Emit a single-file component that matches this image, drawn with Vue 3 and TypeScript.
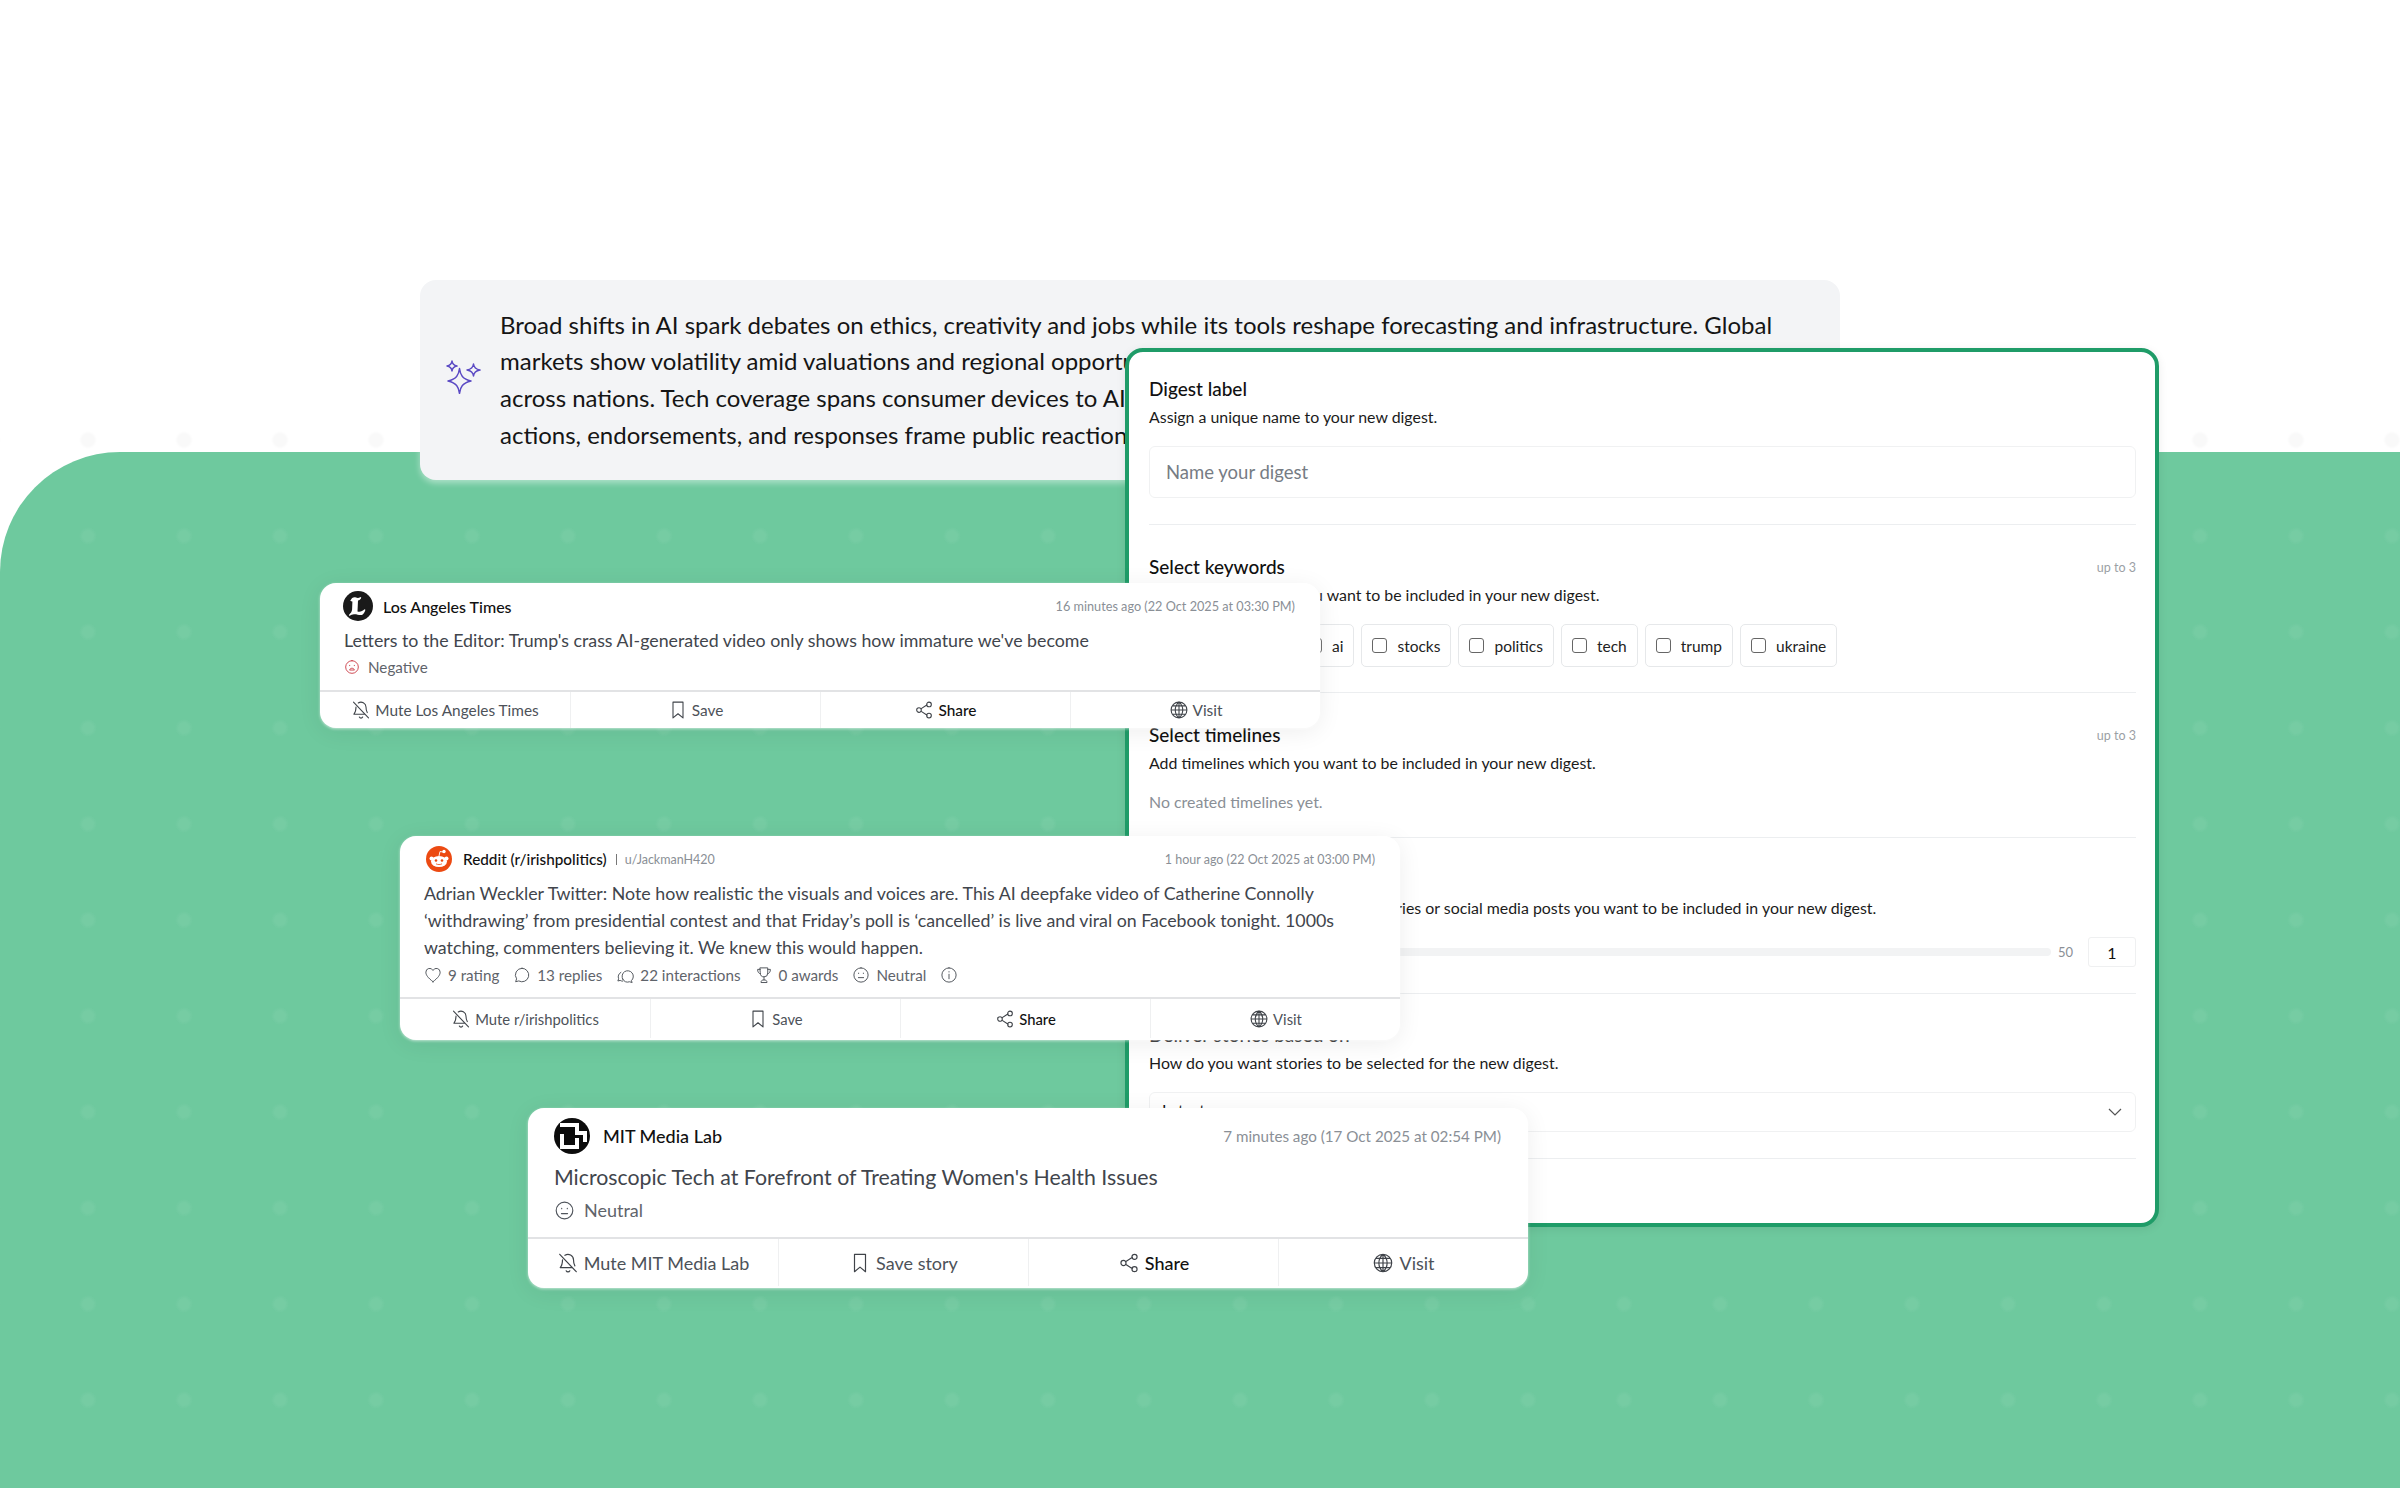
<script setup lang="ts">
interface StoryAction {
  icon: string
  label: string
  strong?: boolean
}

const summaryLines = [
  'Broad shifts in AI spark debates on ethics, creativity and jobs while its tools reshape forecasting and infrastructure. Global',
  'markets show volatility amid valuations and regional opportunities as investors weigh policy moves',
  'across nations. Tech coverage spans consumer devices to AI infrastructure and chips',
  'actions, endorsements, and responses frame public reaction',
]
const redditLines = [
  'Adrian Weckler Twitter: Note how realistic the visuals and voices are. This AI deepfake video of Catherine Connolly',
  '‘withdrawing’ from presidential contest and that Friday’s poll is ‘cancelled’ is live and viral on Facebook tonight. 1000s',
  'watching, commenters believing it. We knew this would happen.',
]

const laActions: StoryAction[] = [
  { icon: 'mute', label: 'Mute Los Angeles Times' },
  { icon: 'save', label: 'Save' },
  { icon: 'share', label: 'Share', strong: true },
  { icon: 'globe', label: 'Visit' },
]
const redditActions: StoryAction[] = [
  { icon: 'mute', label: 'Mute r/irishpolitics' },
  { icon: 'save', label: 'Save' },
  { icon: 'share', label: 'Share', strong: true },
  { icon: 'globe', label: 'Visit' },
]
const mitActions: StoryAction[] = [
  { icon: 'mute', label: 'Mute MIT Media Lab' },
  { icon: 'save', label: 'Save story' },
  { icon: 'share', label: 'Share', strong: true },
  { icon: 'globe', label: 'Visit' },
]
const keywords = ['ai', 'stocks', 'politics', 'tech', 'trump', 'ukraine']

const iconPaths: Record<string, string> = {
  mute: 'M8.7 3.6A6 6 0 0 1 18 8.5c0 3.2.7 5.3 1.5 6.6M17 17H3.5c1.4-1.5 2.5-3.8 2.5-8.5M10 20.5a2.2 2.2 0 0 0 4 0M3 2.5l18 19',
  save: 'M6 2.5h12v19l-6-5-6 5z',
  share: 'M8.2 10.7l7.6-5M8.2 13.3l7.6 5M18 2.5a2.8 2.8 0 1 1 0 5.6 2.8 2.8 0 0 1 0-5.6zM6 9.2a2.8 2.8 0 1 1 0 5.6 2.8 2.8 0 0 1 0-5.6zM18 15.9a2.8 2.8 0 1 1 0 5.6 2.8 2.8 0 0 1 0-5.6z',
  globe: 'M12 2.5a9.5 9.5 0 1 1 0 19 9.5 9.5 0 0 1 0-19zM12 2.5v19M2.5 12h19M4 7h16M4 17h16M12 2.5c-6 5-6 14 0 19M12 2.5c6 5 6 14 0 19',
  heart: 'M12 21C5 15.5 2.5 12 2.5 8.2A5 5 0 0 1 12 6a5 5 0 0 1 9.5 2.2C21.5 12 19 15.5 12 21z',
  reply: 'M12 3a9 9 0 1 1-4.3 16.9L3.5 21l1.3-3.9A9 9 0 0 1 12 3z',
  chats: 'M9 17.5a7.5 7.5 0 1 1 11.5 2l1 2.5-3.5-1a7.5 7.5 0 0 1-9-3.5zM6.5 8.5A6.5 6.5 0 0 0 3.5 17l-1 3 3-.8c1 .6 2.3 1 3.5 1',
  trophy: 'M7 2.5h10v7a5 5 0 0 1-10 0zM7 4.5H3.5c0 3.5 1.3 5.5 3.8 6M17 4.5h3.5c0 3.5-1.3 5.5-3.8 6M12 14.5v4M8 21.5c0-2 1.500-3 4-3s4 1 4 3z',
  neutral: 'M12 2.5a9.5 9.5 0 1 1 0 19 9.5 9.5 0 0 1 0-19zM8.5 15.5h7M8.8 9.5v.5M15.2 9.5v.5',
  info: 'M12 2.5a9.5 9.5 0 1 1 0 19 9.5 9.5 0 0 1 0-19zM12 11v6M12 7.5v.5',
  sad: 'M12 2.5a9.5 9.5 0 1 1 0 19 9.5 9.5 0 0 1 0-19zM8.5 9.5v.5M15.5 9.5v.5M8.5 16c1-3 6-3 7 0z',
}
</script>

<template>
  <div class="stage">
    <div class="top-dots"></div>
    <div class="green-field"></div>

    <!-- AI summary card, sits half on white and half on the green -->
    <section class="summary">
      <svg class="sparkle" viewBox="0 0 36 34" fill="none" stroke="#5b4ac4" stroke-width="1.5" stroke-linejoin="round">
        <path d="M13.5 8.5C14.3 15 16.5 19 25 21C16.5 23 14.3 27 13.5 33.5C12.7 27 10.5 23 2 21C10.5 19 12.7 15 13.5 8.5z" />
        <path d="M6 1C6.3 4 7.5 5.3 11 6C7.5 6.7 6.3 8 6 11C5.7 8 4.5 6.7 1 6C4.5 5.3 5.7 4 6 1z" />
        <path d="M27.5 4C27.9 7.5 29.5 9.2 34 10C29.5 10.800 27.9 12.5 27.5 16C27.1 12.5 25.5 10.8 21 10C25.5 9.2 27.1 7.5 27.5 4z" />
      </svg>
      <div class="summary-text">
        <div v-for="line in summaryLines" :key="line">{{ line }}</div>
      </div>
    </section>

    <!-- new digest form -->
    <section class="digest">
      <div class="block block-label">
        <h3>Digest label</h3>
        <p>Assign a unique name to your new digest.</p>
        <div class="name-input">Name your digest</div>
      </div>
      <div class="block block-keywords">
        <div class="block-head"><h3>Select keywords</h3><span>up to 3</span></div>
        <p>Add keywords which you want to be included in your new digest.</p>
        <div class="chips">
          <span v-for="word in keywords" :key="word" class="chip"><i></i>{{ word }}</span>
        </div>
      </div>
      <div class="block block-timelines">
        <div class="block-head"><h3>Select timelines</h3><span>up to 3</span></div>
        <p>Add timelines which you want to be included in your new digest.</p>
        <div class="empty">No created timelines yet.</div>
      </div>
      <div class="block block-count">
        <h3>Number of stories</h3>
        <p>Select the total number of news stories or social media posts you want to be included in your new digest.</p>
        <div class="slider-row">
          <div class="slider-track"></div>
          <span class="slider-max">50</span>
          <span class="count-box">1</span>
        </div>
      </div>
      <div class="block block-order">
        <h3>Deliver stories based on</h3>
        <p>How do you want stories to be selected for the new digest.</p>
        <div class="select-box">
          <span>Latest</span>
          <svg viewBox="0 0 16 16" fill="none" stroke="#555" stroke-width="1.2"><path d="M2 5l6 6 6-6" /></svg>
        </div>
      </div>
      <div class="block block-last">
        <h3>Delivery</h3>
      </div>
    </section>

    <!-- Los Angeles Times -->
    <article class="story story-la">
      <header class="story-head">
        <svg class="logo" viewBox="0 0 30 30">
          <circle cx="15" cy="15" r="15" fill="#1a1a1a" />
          <path d="M7.5 9.5c1-2.8 3.5-4 5.500-3 1.5.7 3 .5 4.5-.5l.8.8c-.5 1.5-1.8 2.5-3.3 2.7l-.5 11c2.5.7 5-.2 7-2.2l.9.5c-.5 2-1.5 3.8-3 5-2.8.8-5.5-.7-8.400-.5-1.700.1-3 .6-4.500 1.600l-.6-1c1.800-1.600 3-3 3.200-5.300l.3-8.200c-1.300.1-2.100-.4-2.400-1.400z" fill="#fff" />
        </svg>
        <span class="source">Los Angeles Times</span>
        <span class="when">16 minutes ago (22 Oct 2025 at 03:30 PM)</span>
      </header>
      <p class="story-title">Letters to the Editor: Trump's crass AI-generated video only shows how immature we've become</p>
      <div class="story-meta">
        <span class="meta-item"><svg class="meta-icon sad" viewBox="0 0 24 24"><path :d="iconPaths.sad" /></svg>Negative</span>
      </div>
      <footer class="actions">
        <button v-for="a in laActions" :key="a.label" :class="{ strong: a.strong }">
          <svg viewBox="0 0 24 24"><path :d="iconPaths[a.icon]" /></svg>{{ a.label }}
        </button>
      </footer>
    </article>

    <!-- Reddit -->
    <article class="story story-reddit">
      <header class="story-head">
        <svg class="logo" viewBox="0 0 26 26">
          <circle cx="13" cy="13" r="13" fill="#ec4a12" />
          <ellipse cx="13" cy="15.5" rx="8" ry="5.5" fill="#fff" />
          <circle cx="5.5" cy="12.5" r="2" fill="#fff" />
          <circle cx="20.5" cy="12.5" r="2" fill="#fff" />
          <circle cx="18" cy="5.5" r="1.7" fill="#fff" />
          <path d="M13 10l1-4.5 3 .5" stroke="#fff" stroke-width=".9" fill="none" />
          <circle cx="10" cy="14.5" r="1.3" fill="#ec4a12" />
          <circle cx="16" cy="14.5" r="1.3" fill="#ec4a12" />
          <path d="M10 17.8c1.500 1 4.500 1 6 0" stroke="#ec4a12" stroke-width=".8" fill="none" />
        </svg>
        <span class="source">Reddit (r/irishpolitics)</span>
        <span class="author">u/JackmanH420</span>
        <span class="when">1 hour ago (22 Oct 2025 at 03:00 PM)</span>
      </header>
      <div class="story-title">
        <div v-for="line in redditLines" :key="line">{{ line }}</div>
      </div>
      <div class="story-meta">
        <span class="meta-item"><svg class="meta-icon" viewBox="0 0 24 24"><path :d="iconPaths.heart" /></svg>9 rating</span>
        <span class="meta-item"><svg class="meta-icon" viewBox="0 0 24 24"><path :d="iconPaths.reply" /></svg>13 replies</span>
        <span class="meta-item"><svg class="meta-icon" viewBox="0 0 24 24"><path :d="iconPaths.chats" /></svg>22 interactions</span>
        <span class="meta-item"><svg class="meta-icon" viewBox="0 0 24 24"><path :d="iconPaths.trophy" /></svg>0 awards</span>
        <span class="meta-item"><svg class="meta-icon" viewBox="0 0 24 24"><path :d="iconPaths.neutral" /></svg>Neutral</span>
        <svg class="meta-icon" viewBox="0 0 24 24"><path :d="iconPaths.info" /></svg>
      </div>
      <footer class="actions">
        <button v-for="a in redditActions" :key="a.label" :class="{ strong: a.strong }">
          <svg viewBox="0 0 24 24"><path :d="iconPaths[a.icon]" /></svg>{{ a.label }}
        </button>
      </footer>
    </article>

    <!-- MIT Media Lab, a size up from the other two -->
    <article class="story story-mit">
      <header class="story-head">
        <svg class="logo" viewBox="0 0 36 36">
          <circle cx="18" cy="18" r="18" fill="#0c0c0c" />
          <path d="M6 7H23V15H31V24M8 16V29H23V20" fill="none" stroke="#fff" stroke-width="4" />
        </svg>
        <span class="source">MIT Media Lab</span>
        <span class="when">7 minutes ago (17 Oct 2025 at 02:54 PM)</span>
      </header>
      <p class="story-title">Microscopic Tech at Forefront of Treating Women's Health Issues</p>
      <div class="story-meta">
        <span class="meta-item"><svg class="meta-icon" viewBox="0 0 24 24"><path :d="iconPaths.neutral" /></svg>Neutral</span>
      </div>
      <footer class="actions">
        <button v-for="a in mitActions" :key="a.label" :class="{ strong: a.strong }">
          <svg viewBox="0 0 24 24"><path :d="iconPaths[a.icon]" /></svg>{{ a.label }}
        </button>
      </footer>
    </article>
  </div>
</template>

<style scoped>
.stage {
  position: relative;
  width: 2400px;
  height: 1488px;
  overflow: hidden;
  background: #fff;
  font-family: Lato, "Noto Sans", sans-serif;
  color: #111;
}

/* only the last row of dots shows on the white */
.top-dots {
  position: absolute;
  left: 0;
  right: 0;
  top: 428px;
  height: 24px;
  background-image: radial-gradient(circle, rgba(0, 0, 0, 0.025) 0 6px, transparent 9px);
  background-size: 96px 96px;
  background-position: 40px -36px;
}

.green-field {
  position: absolute;
  inset: 452px 0 0 0;
  border-radius: 120px 0 0 0;
  background-color: #6ec99e;
  background-image: radial-gradient(circle, rgba(255, 255, 255, 0.055) 0 5px, transparent 9px);
  background-size: 96px 96px;
  background-position: 40px 36px;
}

.summary {
  position: absolute;
  left: 420px;
  top: 280px;
  width: 1420px;
  height: 200px;
  box-sizing: border-box;
  padding: 0 0 0 26px;
  display: flex;
  align-items: center;
  gap: 18px;
  overflow: hidden;
  background: #f3f4f6;
  border-radius: 16px;
  box-shadow: 0 3px 6px rgba(255, 255, 255, 0.45);
}
.sparkle { width: 36px; height: 34px; flex: none; margin-top: -6px; }
.summary-text {
  white-space: nowrap;
  font-size: 24px;
  line-height: 36.7px;
  color: #151515;
}

.digest {
  position: absolute;
  left: 1125px;
  top: 348px;
  width: 1034px;
  height: 879px;
  box-sizing: border-box;
  overflow: hidden;
  padding: 0 19px 0 20px;
  background: #fff;
  border: 4px solid #1f9c68;
  border-radius: 18px;
  box-shadow: 0 2px 10px rgba(0, 0, 0, 0.08);
}
.block { border-bottom: 1px solid #eceef0; box-sizing: border-box; }
.block h3 { margin: 0; font-size: 19px; line-height: 24px; font-weight: 500; color: #111; }
.block p { margin: 5px 0 0; font-size: 15.9px; line-height: 22px; color: #1b1b1b; white-space: nowrap; }
.block-head { display: flex; justify-content: space-between; align-items: center; }
.block-head span { font-size: 12.5px; color: #9b9fa5; }
.block-label { padding-top: 25px; height: 173px; }
.block-keywords { padding-top: 30px; height: 168px; }
.block-timelines { padding-top: 30px; height: 145px; }
.block-count { padding-top: 30px; height: 156px; }
.block-order { padding-top: 29px; height: 165px; }
.block-last { padding: 60px 0 0 451px; border: 0; }

.name-input {
  margin-top: 18px;
  height: 52px;
  box-sizing: border-box;
  padding-left: 16px;
  display: flex;
  align-items: center;
  border: 1px solid #f0f1f2;
  border-radius: 6px;
  font-size: 18.5px;
  color: #767c84;
}

.chips { display: flex; gap: 7px; margin-top: 18px; padding-left: 147px; }
.chip {
  display: inline-flex;
  align-items: center;
  gap: 10px;
  height: 43px;
  box-sizing: border-box;
  padding: 0 10px;
  border: 1px solid #e6e8ea;
  border-radius: 5px;
  font-size: 15.5px;
  color: #222;
}
.chip i {
  width: 15px;
  height: 15px;
  box-sizing: border-box;
  border: 1.5px solid #666;
  border-radius: 3px;
}

.empty { margin-top: 17px; font-size: 15.9px; line-height: 22px; color: #8a8f96; }

.slider-row { display: flex; align-items: center; margin-top: 18px; }
.slider-track { flex: 1; height: 8px; border-radius: 4px; background: #f2f3f4; }
.slider-max { margin: 0 15px 0 7px; font-size: 13px; color: #8a8f96; }
.count-box {
  width: 48px;
  height: 30px;
  display: flex;
  align-items: center;
  justify-content: center;
  border: 1px solid #eff0f1;
  border-radius: 3px;
  box-sizing: border-box;
  font-size: 16px;
}

.select-box {
  margin-top: 18px;
  height: 40px;
  box-sizing: border-box;
  padding: 0 12px;
  display: flex;
  align-items: center;
  justify-content: space-between;
  border: 1px solid #f0f1f2;
  border-radius: 6px;
  font-size: 16px;
}
.select-box span { margin-top: -5px; }
.select-box svg { width: 16px; height: 16px; }

.story {
  position: absolute;
  box-sizing: border-box;
  overflow: hidden;
  background: #fff;
  border-radius: 16px;
  box-shadow: 0 1px 3px rgba(255, 255, 255, 0.6), 0 4px 24px rgba(0, 0, 0, 0.07);
  display: flex;
  flex-direction: column;
}
.story-head { display: flex; align-items: center; }
.logo { flex: none; }
.source { font-weight: 500; color: #111; }
.author { margin-left: 9px; padding-left: 9px; position: relative; color: #8a8f96; }
.author::before {
  content: "";
  position: absolute;
  left: 0;
  top: 2px;
  bottom: 2px;
  width: 1px;
  background: #777;
}
.when { margin-left: auto; color: #8a8f96; }
.story-title { margin: 0; color: #41454c; white-space: nowrap; }
.story-meta { display: flex; align-items: center; color: #5f646b; }
.meta-item { display: inline-flex; align-items: center; }
.meta-icon { flex: none; fill: none; stroke: #50555c; stroke-width: 1.3; stroke-linecap: round; stroke-linejoin: round; }
.meta-icon.sad { stroke: #c8323c; }

.actions {
  margin-top: auto;
  box-sizing: border-box;
  display: grid;
  grid-template-columns: repeat(4, 1fr);
  border-top: 2px solid #e2e3e5;
}
.actions button {
  display: flex;
  align-items: center;
  justify-content: center;
  padding: 0;
  border: 0;
  border-left: 1px solid #eff0f1;
  background: none;
  font: inherit;
  color: #4d5259;
}
.actions button:first-child { border-left: 0; }
.actions button.strong { color: #111; font-weight: 500; }
.actions svg { flex: none; fill: none; stroke: #3f4349; stroke-width: 1.3; stroke-linecap: round; stroke-linejoin: round; }

.story-la { left: 320px; top: 583px; width: 1000px; height: 145px; }
.story-la .story-head { padding: 8px 25px 0 23px; font-size: 16px; }
.story-la .logo { width: 30px; height: 30px; margin-right: 10px; }
.story-la .when { font-size: 12.7px; }
.story-la .story-title { padding: 7px 24px 0; font-size: 17.8px; line-height: 24px; }
.story-la .story-meta { padding: 6px 24px 0; font-size: 15.2px; }
.story-la .meta-icon { width: 16px; height: 16px; margin-right: 8px; }
.story-la .actions { height: 38px; font-size: 15.4px; }
.story-la .actions svg { width: 20px; height: 20px; margin-right: 4px; }

.story-reddit { left: 400px; top: 836px; width: 1000px; height: 204px; }
.story-reddit .story-head { padding: 10px 25px 0 26px; font-size: 15.3px; height: 36px; box-sizing: border-box; }
.story-reddit .logo { width: 26px; height: 26px; margin-right: 11px; }
.story-reddit .author { font-size: 12.5px; }
.story-reddit .when { font-size: 12.5px; }
.story-reddit .story-title { padding: 8px 24px 0; font-size: 17.8px; line-height: 27px; }
.story-reddit .story-meta { padding: 5px 24px 0; font-size: 15.2px; gap: 14px; }
.story-reddit .meta-icon { width: 18px; height: 18px; margin-right: 6px; }
.story-reddit .actions { height: 43px; padding-bottom: 2px; font-size: 14.8px; }
.story-reddit .actions svg { width: 20px; height: 20px; margin-right: 4px; }

.story-mit { left: 528px; top: 1108px; width: 1000px; height: 180px; }
.story-mit .story-head { padding: 10px 27px 0 26px; font-size: 18px; }
.story-mit .logo { width: 36px; height: 36px; margin-right: 13px; }
.story-mit .when { font-size: 15.2px; }
.story-mit .story-title { padding: 8px 26px 0; font-size: 21.3px; line-height: 30px; }
.story-mit .story-meta { padding: 7px 26px 0; font-size: 18px; }
.story-mit .meta-icon { width: 21px; height: 21px; margin-right: 9px; }
.story-mit .actions { height: 51px; padding-bottom: 2px; font-size: 18px; }
.story-mit .actions svg { width: 22px; height: 22px; margin-right: 5px; }
</style>
